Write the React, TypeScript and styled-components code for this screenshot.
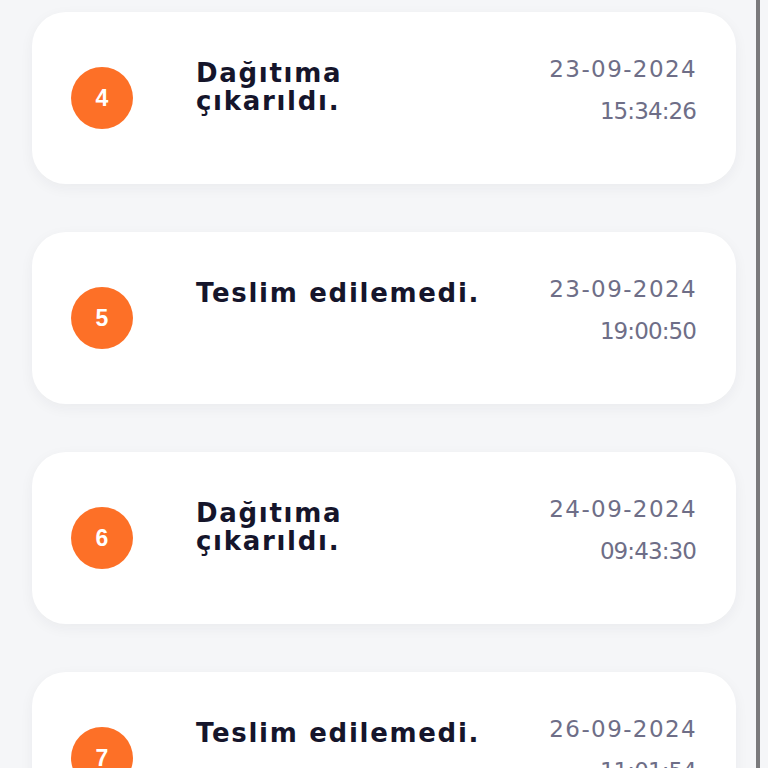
import React from 'react'
import styled, { createGlobalStyle } from 'styled-components'

interface Step {
    no: number
    title: string
    date: string
    time: string
}

const steps: Step[] = [
    { no: 4, title: 'Dağıtıma çıkarıldı.', date: '23-09-2024', time: '15:34:26' },
    { no: 5, title: 'Teslim edilemedi.', date: '23-09-2024', time: '19:00:50' },
    { no: 6, title: 'Dağıtıma çıkarıldı.', date: '24-09-2024', time: '09:43:30' },
    { no: 7, title: 'Teslim edilemedi.', date: '26-09-2024', time: '11:01:54' },
]

const GlobalStyle = createGlobalStyle`
    html, body {
        margin: 0;
        padding: 0;
        background: #f5f6f8;
        overflow: hidden;
    }
`

const Page = styled.div`
    width: 768px;
    height: 768px;
    overflow: hidden;
    box-sizing: border-box;
    padding: 12px 32px 0 32px;
    display: flex;
    flex-direction: column;
    gap: 48px;
    background: #f5f6f8;
`

const ScrollLine = styled.div`
    position: fixed;
    top: 0;
    bottom: 0;
    left: 756px;
    width: 4px;
    background: #7a7a7c;
`

const Card = styled.div`
    flex: none;
    height: 172px;
    background: #ffffff;
    border-radius: 34px;
    box-shadow: 0 4px 14px rgba(30, 35, 60, 0.05);
    box-sizing: border-box;
    padding: 0 39px 0 39px;
    display: flex;
    align-items: flex-start;
`

const Badge = styled.div`
    flex: none;
    align-self: center;
    width: 62px;
    height: 62px;
    border-radius: 50%;
    background: #fd7027;
    color: #ffffff;
    font-family: 'Liberation Sans', Arial, sans-serif;
    font-weight: 700;
    font-size: 23px;
    display: flex;
    align-items: center;
    justify-content: center;
`

const Title = styled.div`
    flex: none;
    margin: 47px 0 0 63px;
    width: 294px;
    font-family: 'DejaVu Sans', sans-serif;
    font-weight: 700;
    font-size: 26px;
    line-height: 28px;
    letter-spacing: 1.7px;
    color: #15152b;
`

const Stamp = styled.div`
    margin: 44px 0 0 auto;
    display: flex;
    flex-direction: column;
    align-items: flex-end;
    gap: 15px;
    font-family: 'DejaVu Sans', sans-serif;
    font-size: 23px;
    line-height: 27px;
    color: #6e6e87;
`

const DateText = styled.span`
    letter-spacing: 1.4px;
`

const TimeText = styled.span`
    letter-spacing: -0.9px;
    margin-right: 1px;
`

export default function App() {
    return (
        <>
            <GlobalStyle />
            <Page>
                {steps.map(s => (
                    <Card key={s.no}>
                        <Badge>{s.no}</Badge>
                        <Title>{s.title}</Title>
                        <Stamp>
                            <DateText>{s.date}</DateText>
                            <TimeText>{s.time}</TimeText>
                        </Stamp>
                    </Card>
                ))}
            </Page>
            <ScrollLine />
        </>
    )
}
